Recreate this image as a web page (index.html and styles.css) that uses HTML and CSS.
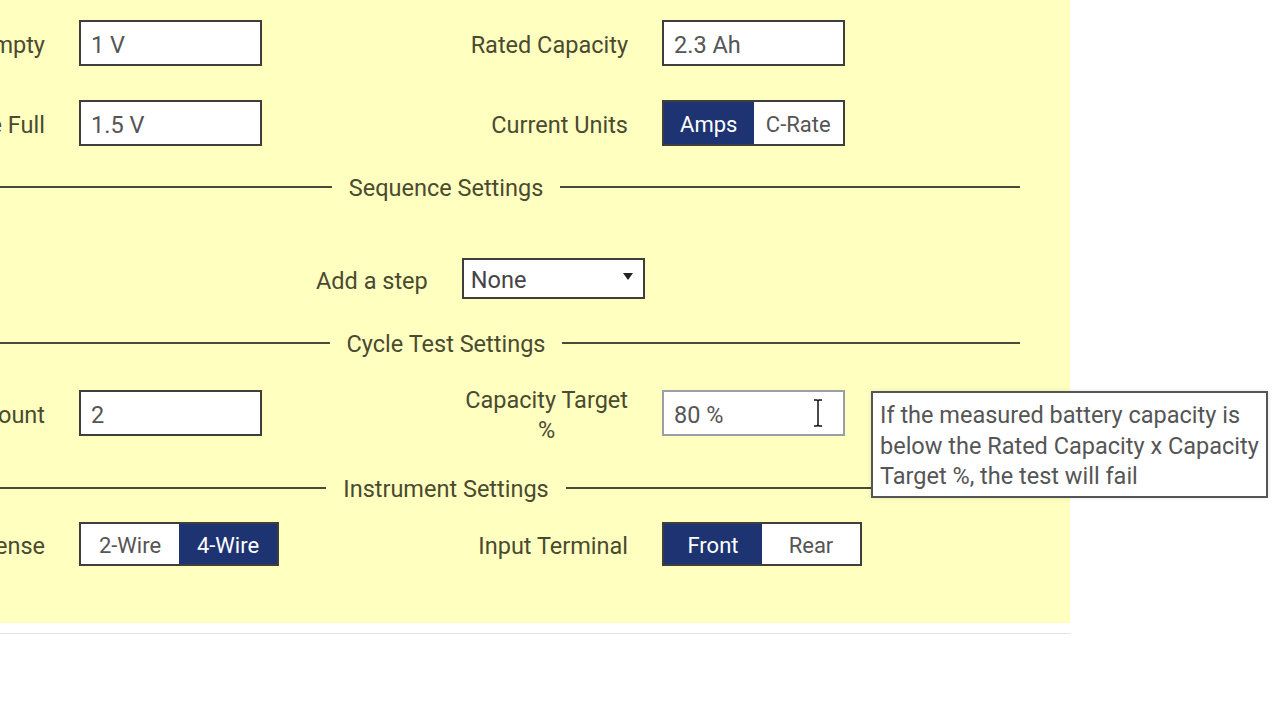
FILE: index.html
```html
<!DOCTYPE html>
<html lang="en">

<head>
  <meta charset="UTF-8">
  <meta name="viewport" content="width=device-width, initial-scale=1.0">
  <title>Battery Test Settings</title>
  <link rel="stylesheet" href="styles.css">
</head>

<body>
  <div class="panel">
    <div class="row">
      <label class="label" for="v-empty">Voltage Empty</label>
      <input class="field" type="text" id="v-empty" value="1 V">
      <label class="label" for="capacity">Rated Capacity</label>
      <input class="field" type="text" id="capacity" value="2.3 Ah">
    </div>

    <div class="row">
      <label class="label" for="v-full">Voltage Full</label>
      <input class="field" type="text" id="v-full" value="1.5 V">
      <span class="label">Current Units</span>
      <div class="toggle units">
        <button type="button" class="active">Amps</button>
        <button type="button">C-Rate</button>
      </div>
    </div>

    <div class="section sequence"><span>Sequence Settings</span></div>

    <div class="step-row">
      <label class="label" for="step">Add a step</label>
      <div class="select" id="step">
        <span>None</span>
        <span class="arrow"></span>
      </div>
    </div>

    <div class="section cycle"><span>Cycle Test Settings</span></div>

    <div class="row tall">
      <label class="label" for="count">Cycle Count</label>
      <input class="field" type="text" id="count" value="2">
      <label class="label two-line" for="target">Capacity Target<br>%</label>
      <div class="field-wrap">
        <input class="field hover" type="text" id="target" value="80 %">
        <!-- mouse cursor over the input -->
        <svg class="cursor" width="12" height="30" viewBox="0 0 12 30">
          <path d="M2 2h3l1 1 1-1h3M6 3v24M2 28h3l1-1 1 1h3" fill="none" stroke="#fff" stroke-width="3.5" />
          <path d="M2 2h3l1 1 1-1h3M6 3v24M2 28h3l1-1 1 1h3" fill="none" stroke="#111" stroke-width="1.5" />
        </svg>
        <div class="tooltip">If the measured battery capacity is below the Rated Capacity x Capacity Target %, the test will fail</div>
      </div>
    </div>

    <div class="section instrument"><span>Instrument Settings</span></div>

    <div class="row last">
      <span class="label">Remote Sense</span>
      <div class="toggle wide">
        <button type="button">2-Wire</button>
        <button type="button" class="active">4-Wire</button>
      </div>
      <span class="label">Input Terminal</span>
      <div class="toggle wide">
        <button type="button" class="active">Front</button>
        <button type="button">Rear</button>
      </div>
    </div>
  </div>
  <div class="footer-line"></div>
</body>

</html>
```

FILE: styles.css
```css
body {
  font-family: Roboto, "Liberation Sans", Arial, sans-serif;
  margin: 0;
  padding: 0;
  background-color: #fff;
  overflow: hidden;
  height: 720px;
}

.panel {
  background-color: #ffffc0;
  width: 1148px;
  margin-left: -178px;
  padding: 20px 50px 57px;
}

.row {
  display: grid;
  grid-template-columns: 173px 183px 332px auto;
  column-gap: 34px;
  align-items: center;
}

.row + .row {
  margin-top: 34px;
}

.row.tall {
  margin-top: 26px;
}

.row.last {
  margin-top: 22px;
}

.label {
  justify-self: end;
  white-space: nowrap;
  font-size: 23.5px;
  color: #4a4a30;
  display: flex;
  justify-content: flex-end;
  padding-top: 4px;
}

.label.two-line {
  white-space: normal;
  text-align: center;
  display: block;
  line-height: 30px;
}

.field {
  box-sizing: border-box;
  width: 183px;
  height: 46px;
  padding: 4px 10px 0;
  border: 2px solid #3e3e3a;
  background: #fff;
  font-family: inherit;
  font-size: 23.5px;
  color: #555;
  outline: none;
}

.field.hover {
  border-color: #9a9fa6;
}

.field-wrap {
  position: relative;
  width: 183px;
}

.cursor {
  position: absolute;
  left: 150px;
  top: 8px;
}

.tooltip {
  position: absolute;
  left: 209px;
  top: 1px;
  width: 397px;
  box-sizing: border-box;
  padding: 7px 2px 4px 7px;
  background: #fff;
  border: 2px solid #555;
  box-shadow: 0 0 4px rgba(0, 0, 0, 0.12);
  font-size: 23.5px;
  line-height: 30.5px;
  color: #555;
}

.toggle {
  display: flex;
  box-sizing: border-box;
  height: 46px;
  border: 2px solid #3e3e3a;
  background: #fff;
}

.toggle.units {
  width: 183px;
}

.toggle.wide {
  width: 200px;
  height: 44px;
}

.toggle button {
  flex: 1;
  border: none;
  background: #fff;
  font-family: inherit;
  font-size: 22px;
  color: #555;
  padding: 2px 0 0;
  cursor: pointer;
}

.toggle button.active {
  background-color: #1e3371;
  color: #fff;
}

.section {
  display: flex;
  align-items: center;
  height: 24px;
  font-size: 23.5px;
  color: #4a4a30;
}

.section::before,
.section::after {
  content: "";
  flex: 1;
  height: 2px;
  background: #4a4a3a;
}

.section span {
  margin: 0 17px;
  padding-top: 2px;
  white-space: nowrap;
}

.section.sequence {
  margin-top: 29px;
}

.section.cycle {
  margin-top: 32px;
}

.section.instrument {
  margin-top: 31px;
}

.step-row {
  display: flex;
  align-items: center;
  gap: 34px;
  margin-top: 59px;
  margin-left: 444px;
}

.select {
  box-sizing: border-box;
  width: 183px;
  height: 41px;
  border: 2px solid #3e3e3a;
  background: #fff;
  display: flex;
  align-items: center;
  justify-content: space-between;
  padding: 2px 10px 0 7px;
  font-size: 23.5px;
  color: #444;
}

.arrow {
  width: 0;
  height: 0;
  border-left: 5px solid transparent;
  border-right: 5px solid transparent;
  border-top: 7px solid #222;
  margin-top: -6px;
}

.footer-line {
  width: 1071px;
  height: 1px;
  margin-top: 10px;
  background: #e4e4e4;
}
```
